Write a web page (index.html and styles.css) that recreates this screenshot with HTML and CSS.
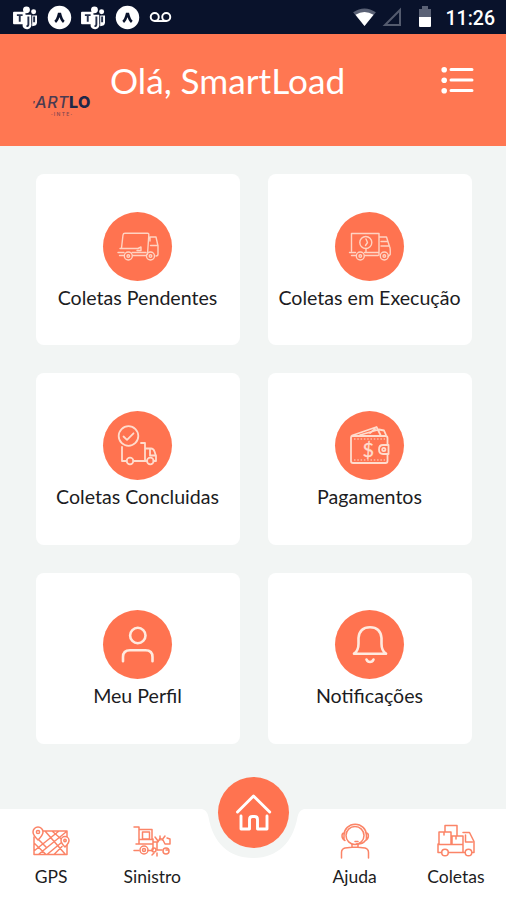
FILE: index.html
```html
<!DOCTYPE html>
<html lang="pt-BR">
<head>
    <meta charset="UTF-8">
    <meta name="viewport" content="width=device-width, initial-scale=1.0">
    <title>SmartLoad</title>
    <link rel="stylesheet" href="styles.css">
</head>
<body>
    <div class="status-bar">
        <div class="status-left">
            <svg class="teams" viewBox="0 0 26 24"><circle cx="14" cy="4" r="3.6"/><circle cx="21.5" cy="6" r="2.6"/><path d="M10 9h9v9a4.500 4.500 0 0 1-9 3z"/><path d="M20 10h5v7q0 4-5 4z"/><rect x="0" y="6" width="13" height="13" rx="1"/><path class="dark" d="M4 9.500h6M7 9.500v7M16 11v8q0 2-2 2M22 11v6"/></svg>
            <svg class="expo" viewBox="0 0 26 26"><circle cx="13" cy="13" r="12.200"/><path class="dark" d="M8.500 17.500q2.500-2 4-8h1q1.500 6 4 8"/></svg>
            <svg class="teams" viewBox="0 0 26 24"><circle cx="14" cy="4" r="3.6"/><circle cx="21.5" cy="6" r="2.6"/><path d="M10 9h9v9a4.500 4.500 0 0 1-9 3z"/><path d="M20 10h5v7q0 4-5 4z"/><rect x="0" y="6" width="13" height="13" rx="1"/><path class="dark" d="M4 9.500h6M7 9.500v7M16 11v8q0 2-2 2M22 11v6"/></svg>
            <svg class="expo" viewBox="0 0 26 26"><circle cx="13" cy="13" r="12.200"/><path class="dark" d="M8.500 17.500q2.500-2 4-8h1q1.500 6 4 8"/></svg>
            <svg class="voicemail" viewBox="0 0 24 12"><circle cx="6" cy="6" r="4.200"/><circle cx="18" cy="6" r="4.200"/><path d="M6 10.200h12"/></svg>
        </div>
        <div class="status-right">
            <svg class="wifi" viewBox="0 0 26 20"><path class="dim" d="M1 4.500Q13-3.500 25 4.500L13 19z"/><path d="M3.500 7Q13 1.500 22.500 7L13 19z"/></svg>
            <svg class="signal" viewBox="0 0 19 19"><path d="M17 2v15H2z"/></svg>
            <svg class="battery" viewBox="0 0 14 22"><path class="dim" d="M1 3h3V0h6v3h3v9H1z"/><path d="M1 11h12v9q0 1-1 1H2q-1 0-1-1z"/></svg>
            <span class="clock">11:26</span>
        </div>
    </div>

    <header class="header">
        <div class="logo">
            <div class="logo-name"><i>'</i><span>ART</span><b>LO</b></div>
            <div class="logo-sub">· I N T E ·</div>
        </div>
        <h1 class="title">Olá, SmartLoad</h1>
        <svg class="menu" viewBox="0 0 33 28"><path d="M10 3.500h21M10 14h21M10 24.500h21"/><circle cx="3.200" cy="3.700" r="2.800"/><circle cx="3.200" cy="14.200" r="2.800"/><circle cx="3.200" cy="24.700" r="2.800"/></svg>
    </header>

    <main class="grid">
        <div class="card">
            <svg class="icon thin" viewBox="0 0 69 69">
                <path d="M18.500 36L20 23q.2-1.800 2-1.800h22.500q1.500 0 1.300 2l-1.300 19M47 25h6l2 9v8q0 2-2 2M47.500 33.500h7.500M47 29v-4M17 36.500h18l3-1.500v3.500h-4M15 40.500h6M16.500 43.500h4M30 43.500h13M29 40.500h14"/>
                <circle cx="25.300" cy="44" r="4"/><circle cx="25.300" cy="44" r="1.300"/><circle cx="47.500" cy="44" r="4"/><circle cx="47.500" cy="44" r="1.300"/>
            </svg>
            <div class="label">Coletas Pendentes</div>
        </div>
        <div class="card">
            <svg class="icon thin" viewBox="0 0 69 69">
                <path d="M16.500 39V21.500h27.500v21.500M44.500 25h7l3 9.500q1 1 .7 8l-2 2M46 29.500h6M46 34h8.500M14.500 40.500h6M16.500 43.500h4M30 43.500h13M29.500 40.500h14"/>
                <circle cx="30.800" cy="30.500" r="6"/><path d="M31 36.500v3M31 27l1.500 3.500-2 3"/>
                <circle cx="25.300" cy="44" r="4"/><circle cx="25.300" cy="44" r="1.300"/><circle cx="49.300" cy="44" r="4"/><circle cx="49.300" cy="44" r="1.300"/>
            </svg>
            <div class="label">Coletas em Execução</div>
        </div>
        <div class="card">
            <svg class="icon medium" viewBox="0 0 69 69">
                <circle cx="25.500" cy="25" r="9.800"/><path d="M20.500 25.500l3.500 3.300 6.500-6.500"/>
                <path d="M19 36v14h4.500M30.500 50h13.500M38 32H42v18M42 37.500h6q2.500 0 3.500 3l1.500 4.500v5h-2.500M47 38v6.500h6"/>
                <circle cx="27" cy="50" r="3.300"/><circle cx="47.300" cy="50" r="3.300"/>
            </svg>
            <div class="label">Coletas Concluidas</div>
        </div>
        <div class="card">
            <svg class="icon medium" viewBox="0 0 69 69">
                <path d="M52.500 34V27q0-2-2-2H17.500q-1.500 0-1.500 1.500V50q0 2 2 2h32.500q2 0 2-2v-7M17 24.500L41.500 16l4 8M25 24l19-5.500 5 1 2 4.500M35 22l5-4"/>
                <path class="dash" d="M19 28h31M19 49h31"/>
                <path d="M53.500 34H48q-4 0-4 4.500t4 4.500h5.500z"/><circle cx="48.800" cy="38.500" r="1.600"/>
                <text class="dollar" x="33.300" y="45.500">$</text>
            </svg>
            <div class="label">Pagamentos</div>
        </div>
        <div class="card">
            <svg class="icon bold" viewBox="0 0 69 69">
                <circle cx="34.800" cy="25.500" r="7.700"/>
                <path d="M20 51.300V47q0-6.800 7-6.800h15.500q7 0 7 6.800v4.300"/>
            </svg>
            <div class="label">Meu Perfil</div>
        </div>
        <div class="card">
            <svg class="icon bold" viewBox="0 0 69 69">
                <path d="M19 43.700q4.500-3 4.500-10V28q1-10.800 11.500-10.800T46.500 28v5.700q0 7 4.500 10zM31.500 49.500q1 2.500 3.500 2.500t3.500-2.500"/>
            </svg>
            <div class="label">Notificações</div>
        </div>
    </main>

    <nav class="nav">
        <a class="nav-item">
            <svg viewBox="0 0 40 38">
                <path d="M9 8h27v23.500H3V14M8 31l27-22M3 20l12 11.500M14 8l20 23M3 28L28 8M21 8l15 13M16 31.500L36 15M8 17l7 7M23 31.500l8-8"/>
                <path class="solid" d="M7 17q-5-5-5-8a5 5 0 0 1 10 0q0 3-5 8zM34 24q-4-4-4-6.500a4 4 0 0 1 8 0q0 2.500-4 6.500z"/><circle cx="7" cy="9" r="1.600"/><circle cx="34" cy="17.500" r="1.200"/>
            </svg>
            <span>GPS</span>
        </a>
        <a class="nav-item">
            <svg viewBox="0 0 40 38">
                <path d="M2 4h5v17M7 6.500h13v10H7M10.500 9h7v7h-7zM4 21h17M2 27.500h5M16 27.500h4M21 16v11M23 14l3 4M28 13v4M33 13l-3 4M22 19h4l2-4 3 2 2 4h5v-5l-3-1M25 20v7h5M34 27h2M20 32l2-2M25 33v-3"/>
                <circle cx="12" cy="27" r="4"/><circle cx="12" cy="27" r="1.500"/><circle cx="34" cy="28" r="3"/><circle cx="22" cy="27" r="2"/>
            </svg>
            <span>Sinistro</span>
        </a>
        <a class="nav-item home">
            <svg class="notch" viewBox="0 0 100 52"><path d="M-1-1V0Q4 1 5.500 8C10 34 26 49 50 49S90 34 94.500 8Q96 1 101 0V-1z"/></svg>
            <svg class="home-icon" viewBox="0 0 71 71"><path d="M19.500 35L35.500 19 51.700 35M23 39v13h8.500V42.500q0-3 3-3h2q3 0 3 3V52H49V39"/></svg>
        </a>
        <a class="nav-item">
            <svg viewBox="0 0 40 38">
                <circle cx="20" cy="12.500" r="9"/><path d="M9 17V12a11.200 10.800 0 0 1 22.400 0v5M9 10q-2 0-2 3t3 4.500M31.400 10q2 0 2 3t-3 4.500q-3 4-9 3.500M20 18.500h3M6.500 35V29.500q0-3.500 3.500-4.500l7-.7v-2.500M33.500 35V29.500q0-3.500-3.500-4.500l-7-.7v-2.500M17 24.300h6"/>
            </svg>
            <span>Ajuda</span>
        </a>
        <a class="nav-item">
            <svg viewBox="0 0 40 38">
                <path d="M3 21V9h12v12M9 9V2.500h12V13M16 21v-8h11v8M2 21.500h25v8M2 21v8.500h3.500M12.500 29.500h16M27 9.500h6.500l4.500 9v11h-1.500M29.500 12v7h7M8 9v3M20 13v3"/>
                <circle cx="9" cy="29.500" r="3.300"/><circle cx="32.500" cy="29.500" r="3.300"/>
            </svg>
            <span>Coletas</span>
        </a>
    </nav>
</body>
</html>
```
FILE: styles.css
```css
* {
    box-sizing: border-box;
}

body {
    margin: 0;
    height: 900px;
    display: flex;
    flex-direction: column;
    background-color: #f2f5f4;
    font-family: Lato, "Liberation Sans", sans-serif;
    color: #1c1c22;
    overflow: hidden;
}

svg {
    display: block;
    flex: none;
    overflow: visible;
}

.status-bar {
    height: 34px;
    background-color: #09122b;
    display: flex;
    justify-content: space-between;
    align-items: center;
    padding: 0 11px 0 13px;
}

.status-left,
.status-right {
    display: flex;
    align-items: center;
    fill: #fff;
}

.status-left {
    gap: 9px;
}

.teams {
    width: 25px;
    height: 23px;
}

.expo {
    width: 25px;
    height: 25px;
}

.dark {
    fill: none;
    stroke: #26304a;
    stroke-width: 2;
}

.expo .dark {
    stroke: #09122b;
    stroke-width: 2.8;
}

.voicemail {
    width: 23px;
    height: 12px;
    fill: none;
    stroke: #fff;
    stroke-width: 2;
}

.wifi {
    width: 25px;
    height: 19px;
}

.signal {
    width: 19px;
    height: 19px;
    margin-left: 6px;
    fill: none;
    stroke: #545b6e;
    stroke-width: 2;
}

.battery {
    width: 14px;
    height: 22px;
    margin-left: 16px;
}

.dim {
    fill: #5a6175;
}

.clock {
    margin-left: 14px;
    padding-top: 2px;
    color: #fff;
    font: 500 19.5px Roboto, sans-serif;
}

.header {
    height: 112px;
    background-color: #ff7752;
    display: flex;
    align-items: flex-start;
    padding: 0 32px 0 32px;
}

.logo {
    width: 78px;
    padding-top: 60px;
    color: #202748;
    white-space: nowrap;
}

.logo-name {
    font: 500 16px/17px Inter, sans-serif;
    letter-spacing: 0.5px;
}

.logo-name i {
    font-size: 9px;
}

.logo-name span {
    font-style: italic;
    color: #4b3b51;
}

.logo-name b {
    font-weight: 800;
}

.logo-sub {
    margin-top: -2px;
    padding-left: 19px;
    color: #7c4450;
    font: 500 5px/6px Inter, sans-serif;
}

.title {
    margin: 23px 0 0;
    flex: 1;
    color: #fff;
    font-size: 35.2px;
    line-height: 46px;
    font-weight: 400;
    white-space: nowrap;
}

.menu {
    width: 33px;
    height: 28px;
    margin-top: 32px;
    fill: #fff;
    stroke: #fff;
    stroke-width: 3;
    stroke-linecap: round;
}

.menu circle {
    stroke: none;
}

.grid {
    flex: 1;
    display: grid;
    grid-template-columns: 204px 204px;
    grid-auto-rows: 171.3px;
    gap: 28px;
    align-content: start;
    padding: 28px 36px 0;
}

.card {
    background-color: #fff;
    border-radius: 8px;
    display: flex;
    flex-direction: column;
    align-items: center;
    padding: 37.5px 1px 0 0;
}

.icon {
    width: 69px;
    height: 69px;
    border-radius: 50%;
    background-color: #ff7350;
    fill: none;
    stroke: #ffeadf;
    stroke-linejoin: round;
    stroke-linecap: round;
}

.thin {
    stroke-width: 1.4;
    stroke: #ffd3c2;
}

.medium {
    stroke-width: 1.8;
    stroke: #ffdccd;
}

.bold {
    stroke-width: 2.6;
}

.dash {
    stroke-width: 1.2;
    stroke-dasharray: 1.5 1.8;
    stroke-linecap: butt;
}

.dollar {
    font: 400 20px Lato, sans-serif;
    text-anchor: middle;
    fill: #ffdccd;
    stroke-width: 0.3;
}

.label {
    margin-top: 4px;
    font-size: 19.6px;
    line-height: 26px;
    white-space: nowrap;
}

.nav {
    height: 91px;
    background-color: #fff;
    display: grid;
    grid-template-columns: repeat(5, minmax(0, 1fr));
}

.nav-item {
    display: flex;
    flex-direction: column;
    align-items: center;
    padding: 14px 0 0 1px;
    font-size: 17.5px;
    line-height: 24px;
}

.nav-item svg {
    width: 40px;
    height: 38px;
    fill: none;
    stroke: #fb8467;
    stroke-width: 1.5;
    stroke-linejoin: round;
    stroke-linecap: round;
}

.nav-item span {
    margin-top: 4px;
}

.nav-item .solid {
    fill: #fff;
}

.home {
    position: relative;
    padding-top: 0;
}

/* curved notch cut around the home button */
.home .notch {
    width: 100px;
    height: 52px;
    fill: #f2f5f4;
    stroke: none;
}

.home .home-icon {
    position: absolute;
    top: -32px;
    width: 71px;
    height: 71px;
    border-radius: 50%;
    background-color: #ff7350;
    stroke: #fff;
    stroke-width: 2.9;
}
```
